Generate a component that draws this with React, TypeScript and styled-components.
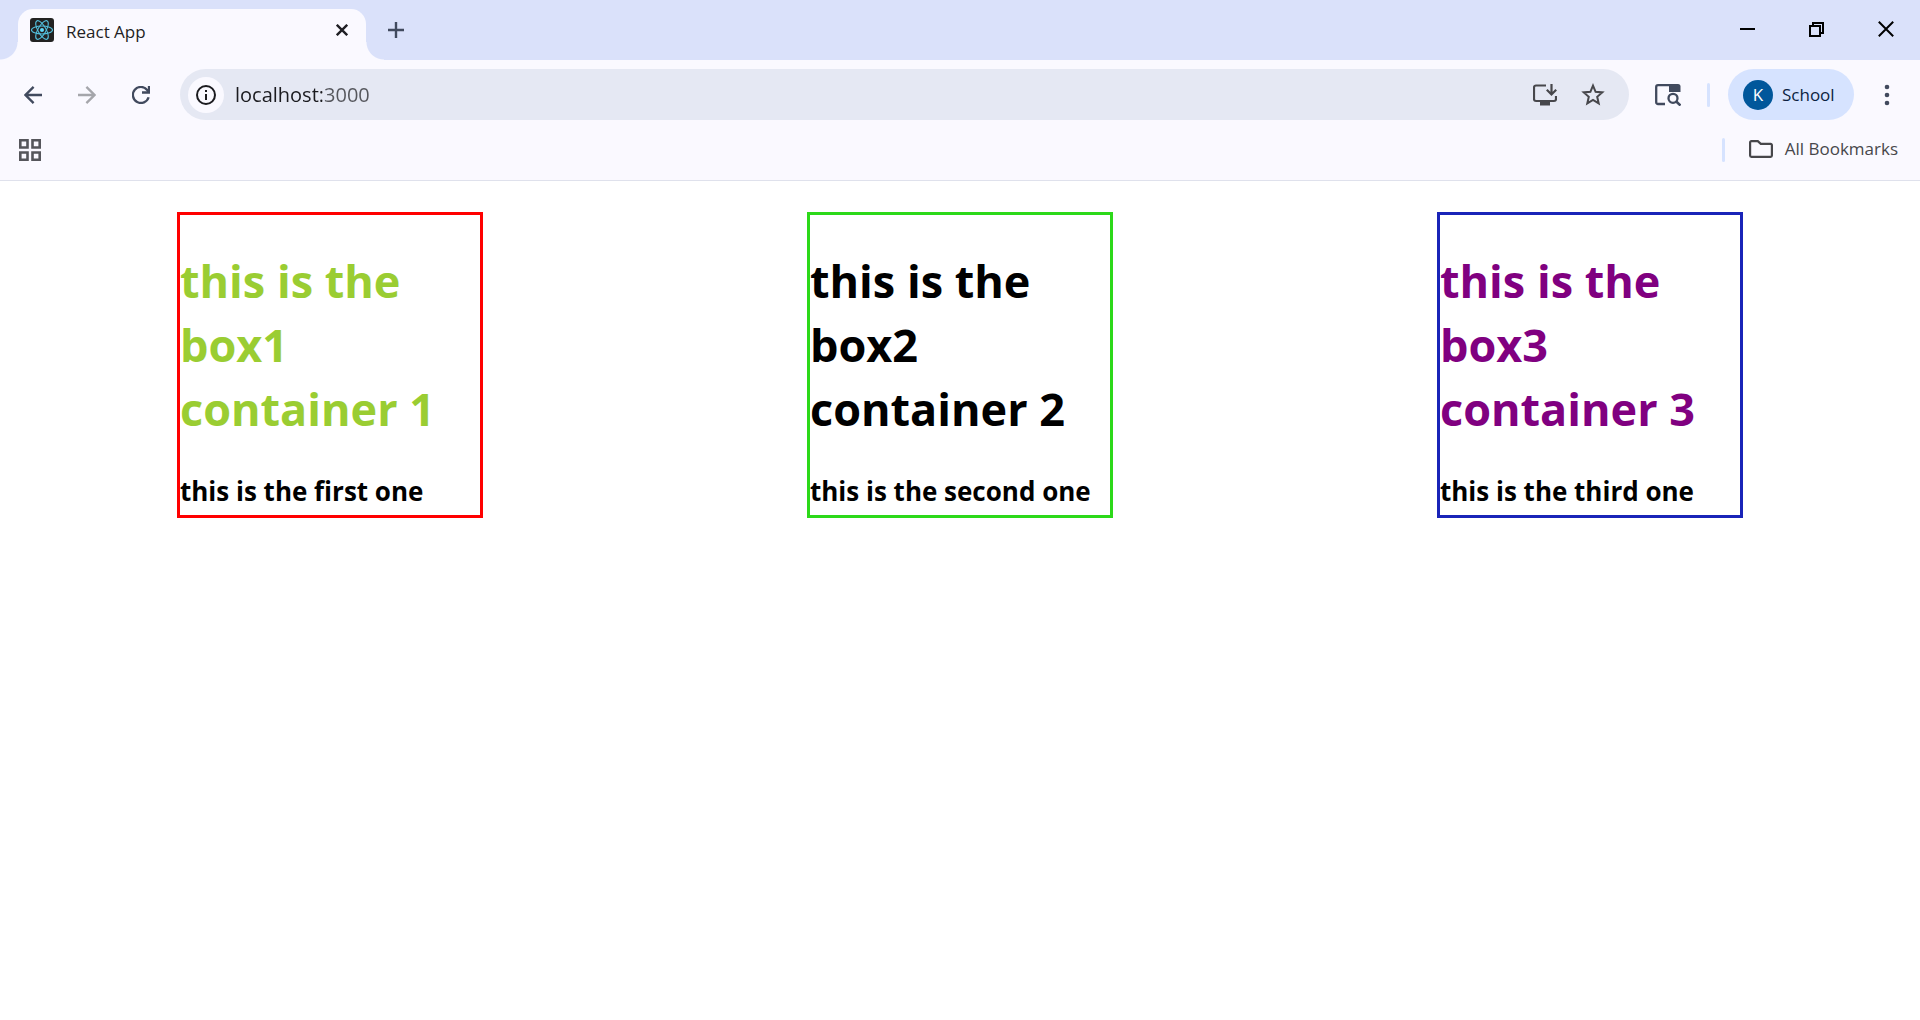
import React from "react";
import styled, { createGlobalStyle } from "styled-components";

const GlobalStyle = createGlobalStyle`
  *, *::before, *::after { box-sizing: border-box; }
  body {
    margin: 0;
    background: #ffffff;
    font-family: "Open Sans", "Noto Sans", sans-serif;
  }
  h1, h3 { margin: 0; }
  svg { display: block; flex: none; }
`;

const TabStrip = styled.header`
  display: flex;
  align-items: flex-end;
  height: 60px;
  padding-left: 18px;
  background: #dae1fa;
`;

const Tab = styled.div`
  position: relative;
  display: flex;
  align-items: center;
  width: 348px;
  height: 51px;
  padding: 0 12px 9px;
  border-radius: 15px 15px 0 0;
  background: #faf9ff;

  &::before,
  &::after {
    content: "";
    position: absolute;
    bottom: 0;
    width: 18px;
    height: 18px;
  }
  &::before {
    right: 100%;
    background: radial-gradient(circle at 0 0, transparent 17px, #faf9ff 18px);
  }
  &::after {
    left: 100%;
    background: radial-gradient(circle at 100% 0, transparent 17px, #faf9ff 18px);
  }
`;

const TabTitle = styled.span`
  flex: 1;
  padding: 3px 0 0 12px;
  font-size: 17px;
  line-height: 24px;
  color: #1f1f24;
`;

const IconButton = styled.button<{ $width?: number; $height?: number; $color?: string }>`
  display: flex;
  align-items: center;
  justify-content: center;
  flex: none;
  width: ${(p) => p.$width ?? 48}px;
  height: ${(p) => p.$height ?? 48}px;
  padding: 0;
  border: 0;
  background: none;
  color: ${(p) => p.$color ?? "#414a5e"};
`;

const WindowControls = styled.div`
  display: flex;
  align-self: flex-start;
  margin-left: auto;
`;

const Toolbar = styled.nav`
  display: flex;
  align-items: center;
  padding: 9px 9px 0 6px;
  background: #faf9ff;
`;

const AddressBar = styled.div`
  display: flex;
  align-items: center;
  flex: 1;
  height: 51px;
  margin-left: 12px;
  padding: 0 12px 0 8px;
  border-radius: 26px;
  background: #e5e8f3;
`;

const SiteInfo = styled(IconButton)`
  border-radius: 50%;
  background: #faf9ff;
`;

const AddressInput = styled.input`
  flex: 1;
  min-width: 0;
  height: 36px;
  padding: 0 0 0 11px;
  border: 0;
  outline: 0;
  font-family: inherit;
  font-size: 20px;
  color: #1b1b1f;
  background: linear-gradient(90deg, #1b1b1f 98px, #55565c 98px);
  background-clip: text;
  -webkit-background-clip: text;
  -webkit-text-fill-color: transparent;
`;

const Divider = styled.span`
  flex: none;
  width: 3px;
  height: 24px;
  border-radius: 2px;
  background: #d6e3ff;
`;

const ProfileButton = styled.button`
  display: flex;
  align-items: center;
  gap: 9px;
  height: 51px;
  width: 126px;
  margin: 0 9px 0 18px;
  padding: 0 15px;
  border: 0;
  border-radius: 26px;
  background: #d6e3ff;
  font-family: inherit;
  font-size: 17px;
  color: #0c1f42;
`;

const Avatar = styled.span`
  display: grid;
  place-items: center;
  width: 30px;
  height: 30px;
  border-radius: 50%;
  background: #01579b;
  color: #ffffff;
`;

const BookmarksBar = styled.div`
  display: flex;
  align-items: center;
  height: 61px;
  padding: 0 22px 0 6px;
  border-bottom: 1px solid #dfe1ec;
  background: #faf9ff;
`;

const BookmarksButton = styled.button`
  display: flex;
  align-items: center;
  gap: 12px;
  padding: 0 0 2px 24px;
  border: 0;
  background: none;
  font-family: inherit;
  font-size: 17px;
  line-height: 24px;
  color: #47474b;
`;

const Spacer = styled.span`
  flex: 1;
`;

const Page = styled.main`
  display: flex;
  justify-content: space-around;
  padding: 31px 15px;
`;

const Box = styled.section<{ $border: string }>`
  width: 306px;
  height: 306px;
  padding-top: 34px;
  border: 3px solid ${(p) => p.$border};
`;

const BoxTitle = styled.h1<{ $color: string }>`
  font-size: 45px;
  line-height: 64px;
  font-weight: 700;
  color: ${(p) => p.$color};
`;

const BoxCaption = styled.h3`
  margin-top: 32px;
  font-size: 26px;
  line-height: 37px;
  font-weight: 700;
  white-space: nowrap;
  color: #000000;
`;

const boxes = [
  { title: "this is the box1 container 1", caption: "this is the first one", border: "#ff0000", color: "#9acd32" },
  { title: "this is the box2 container 2", caption: "this is the second one", border: "#2cd919", color: "#000000" },
  { title: "this is the box3 container 3", caption: "this is the third one", border: "#1924b8", color: "#800080" },
];

function ReactLogo() {
  return (
    <svg width="24" height="24" viewBox="0 0 24 24" fill="none" stroke="#53c1de" strokeWidth="1.1">
      <rect width="24" height="24" rx="3" fill="#222222" stroke="none" />
      <ellipse cx="12" cy="12" rx="10.5" ry="4" />
      <ellipse cx="12" cy="12" rx="10.5" ry="4" transform="rotate(60 12 12)" />
      <ellipse cx="12" cy="12" rx="10.5" ry="4" transform="rotate(120 12 12)" />
      <circle cx="12" cy="12" r="2" fill="#61dafb" stroke="none" />
    </svg>
  );
}

export default function App() {
  return (
    <>
      <GlobalStyle />
      <TabStrip>
        <Tab>
          <ReactLogo />
          <TabTitle>React App</TabTitle>
          <IconButton $width={24} $height={24} $color="#1f1f24" aria-label="Close tab">
            <svg width="12" height="12" viewBox="0 0 12 12" stroke="currentColor" strokeWidth="2.4">
              <path d="M.8.8l10.4 10.4M11.2.8L.8 11.2" />
            </svg>
          </IconButton>
        </Tab>
        <IconButton $width={60} $height={60} aria-label="New tab">
          <svg width="16" height="16" viewBox="0 0 16 16" stroke="currentColor" strokeWidth="2.4">
            <path d="M8 0v16M0 8h16" />
          </svg>
        </IconButton>
        <WindowControls>
          <IconButton $width={69} $height={58} $color="#000000" aria-label="Minimize">
            <svg width="15" height="2" viewBox="0 0 15 2">
              <rect width="15" height="2" fill="currentColor" />
            </svg>
          </IconButton>
          <IconButton $width={69} $height={58} $color="#000000" aria-label="Restore">
            <svg width="15" height="15" viewBox="0 0 15 15" fill="none" stroke="currentColor" strokeWidth="2">
              <path d="M1 4h10v10H1z" />
              <path d="M4 4V1h10v10h-3" />
            </svg>
          </IconButton>
          <IconButton $width={69} $height={58} $color="#000000" aria-label="Close">
            <svg width="16" height="16" viewBox="0 0 16 16" stroke="currentColor" strokeWidth="2">
              <path d="M.8.8l14.4 14.4M15.2.8L.8 15.2" />
            </svg>
          </IconButton>
        </WindowControls>
      </TabStrip>
      <Toolbar>
        <IconButton $width={54} aria-label="Back">
          <svg width="18" height="18" viewBox="0 0 18 18" fill="none" stroke="currentColor" strokeWidth="2.3">
            <path d="M9.6.9L1.5 9l8.1 8.1M1.5 9H18" />
          </svg>
        </IconButton>
        <IconButton $width={54} $color="#a5a6ab" aria-label="Forward">
          <svg width="18" height="18" viewBox="0 0 18 18" fill="none" stroke="currentColor" strokeWidth="2.3">
            <path d="M8.4.9L16.5 9l-8.1 8.1M16.5 9H0" />
          </svg>
        </IconButton>
        <IconButton $width={54} aria-label="Reload">
          <svg width="18" height="18" viewBox="0 0 18 18" fill="none" stroke="currentColor" strokeWidth="2.3">
            <path d="M16.6 11.2A8 8 0 1 1 15.2 4l1.2 1.8" />
            <path d="M17 0v6.5h-7" />
          </svg>
        </IconButton>
        <AddressBar>
          <SiteInfo $width={36} $height={36} $color="#1b1b1f" aria-label="View site information">
            <svg width="20" height="20" viewBox="0 0 20 20" fill="none" stroke="currentColor" strokeWidth="2">
              <circle cx="10" cy="10" r="9" />
              <path d="M10 9v6M10 5v2" />
            </svg>
          </SiteInfo>
          <AddressInput aria-label="Address" defaultValue="localhost:3000" />
          <IconButton $color="#47474b" aria-label="Install app">
            <svg width="24" height="22" viewBox="0 0 24 22" fill="none" stroke="currentColor" strokeWidth="2.2">
              <path d="M13 1.5H3a2 2 0 0 0-2 2V15a2 2 0 0 0 2 2h18a2 2 0 0 0 2-2v-3" />
              <path d="M18.5 0v10M13.8 5.8l4.7 4.7 4.7-4.7" />
              <path d="M7 17h10v4.5H7z" fill="currentColor" stroke="none" />
            </svg>
          </IconButton>
          <IconButton $color="#47474b" aria-label="Bookmark this tab">
            <svg width="24" height="24" viewBox="0 0 24 24" fill="none" stroke="currentColor" strokeWidth="2">
              <path d="M12 2.6l2.6 6.2 6.7.6-5.1 4.4 1.5 6.6-5.7-3.5-5.7 3.5 1.5-6.6-5.1-4.4 6.7-.6z" />
            </svg>
          </IconButton>
        </AddressBar>
        <IconButton $width={78} aria-label="Search tabs">
          <svg width="26" height="22" viewBox="0 0 26 22" fill="none" stroke="currentColor" strokeWidth="2.3">
            <path d="M10 20H3a1.8 1.8 0 0 1-1.8-1.8V3A1.8 1.8 0 0 1 3 1.2h11" />
            <path d="M14 0h9a2.5 2.5 0 0 1 2.5 2.5V8H14z" fill="currentColor" stroke="none" />
            <circle cx="18" cy="14.3" r="4.5" />
            <path d="M21 17.3l4.5 4.2" strokeWidth="2.6" />
          </svg>
        </IconButton>
        <Divider />
        <ProfileButton>
          <Avatar>K</Avatar>
          School
        </ProfileButton>
        <IconButton aria-label="Menu">
          <svg width="6" height="22" viewBox="0 0 6 22" fill="currentColor">
            <circle cx="3" cy="3" r="2.3" />
            <circle cx="3" cy="11" r="2.3" />
            <circle cx="3" cy="19" r="2.3" />
          </svg>
        </IconButton>
      </Toolbar>
      <BookmarksBar>
        <IconButton $color="#55565b" aria-label="Apps">
          <svg width="22" height="22" viewBox="0 0 22 22" fill="none" stroke="currentColor" strokeWidth="2.6">
            <path d="M1.3 1.3h7.2v7.2H1.3zM13.5 1.3h7.2v7.2h-7.2zM1.3 13.5h7.2v7.2H1.3zM13.5 13.5h7.2v7.2h-7.2z" />
          </svg>
        </IconButton>
        <Spacer />
        <Divider />
        <BookmarksButton>
          <svg width="24" height="18" viewBox="0 0 24 18" fill="none" stroke="currentColor" strokeWidth="2.2">
            <path d="M2.4 1.1h6.4l3 2.8h9.8a1.3 1.3 0 0 1 1.3 1.3v10.4a1.3 1.3 0 0 1-1.3 1.3H2.4a1.3 1.3 0 0 1-1.3-1.3V2.4a1.3 1.3 0 0 1 1.3-1.3z" />
          </svg>
          All Bookmarks
        </BookmarksButton>
      </BookmarksBar>
      <Page>
        {boxes.map((box) => (
          <Box key={box.title} $border={box.border}>
            <BoxTitle $color={box.color}>{box.title}</BoxTitle>
            <BoxCaption>{box.caption}</BoxCaption>
          </Box>
        ))}
      </Page>
    </>
  );
}
